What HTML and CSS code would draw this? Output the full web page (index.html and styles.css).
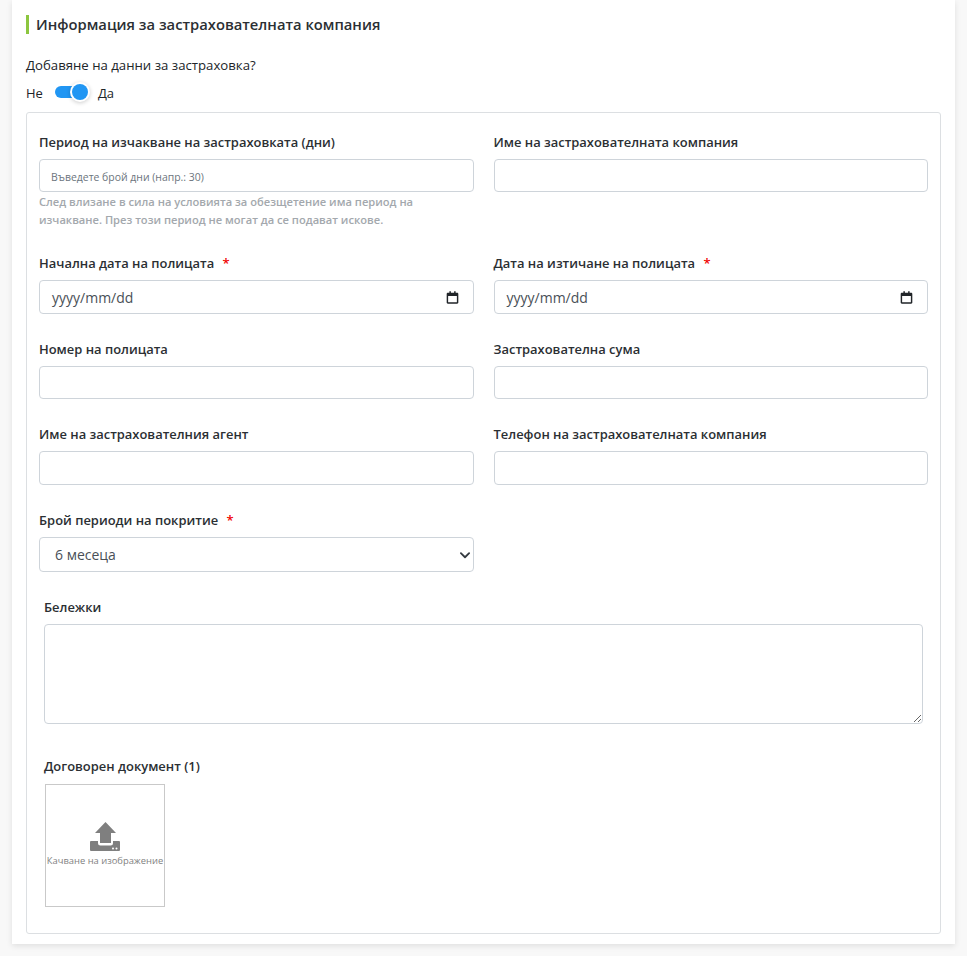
FILE: index.html
```html
<!DOCTYPE html>
<html lang="bg">
<head>
    <meta charset="UTF-8">
    <meta name="viewport" content="width=device-width, initial-scale=1.0">
    <title>Застраховка</title>
    <link rel="stylesheet" href="styles.css">
</head>
<body>

<div class="card">
    <!-- Section title -->
    <h2 class="section-title">Информация за застрахователната компания</h2>

    <!-- Yes / no switch -->
    <p class="question">Добавяне на данни за застраховка?</p>
    <div class="switch-row">
        <span>Не</span>
        <span class="switch"><span class="switch-knob"></span></span>
        <span>Да</span>
    </div>

    <div class="form-box">
        <div class="form-grid">
            <div class="field field-wait">
                <label>Период на изчакване на застраховката (дни)</label>
                <input class="control control-small" type="text" placeholder="Въведете брой дни (напр.: 30)">
                <p class="help">След влизане в сила на условията за обезщетение има период на изчакване. През този период не могат да се подават искове.</p>
            </div>
            <div class="field field-wait">
                <label>Име на застрахователната компания</label>
                <input class="control control-small" type="text">
            </div>

            <div class="field">
                <label>Начална дата на полицата <span class="req">*</span></label>
                <div class="control date-control">
                    <span>yyyy/mm/dd</span>
                    <svg class="cal" viewBox="0 0 24 24"><path d="M7 2h2.4v2.2h5.2V2H17v2.2h2.5c1 0 1.8.8 1.8 1.8v14c0 1-.8 1.8-1.8 1.8h-15c-1 0-1.8-.8-1.8-1.8V6c0-1 .8-1.8 1.8-1.8H7V2zM5 9.5V19.500h14V9.500H5z"/></svg>
                </div>
            </div>
            <div class="field">
                <label>Дата на изтичане на полицата <span class="req">*</span></label>
                <div class="control date-control">
                    <span>yyyy/mm/dd</span>
                    <svg class="cal" viewBox="0 0 24 24"><path d="M7 2h2.4v2.2h5.2V2H17v2.2h2.5c1 0 1.8.8 1.8 1.8v14c0 1-.8 1.8-1.8 1.8h-15c-1 0-1.8-.8-1.8-1.8V6c0-1 .8-1.8 1.8-1.8H7V2zM5 9.5V19.500h14V9.500H5z"/></svg>
                </div>
            </div>

            <div class="field field-short">
                <label>Номер на полицата</label>
                <input class="control control-small" type="text">
            </div>
            <div class="field field-short">
                <label>Застрахователна сума</label>
                <input class="control control-small" type="text">
            </div>

            <div class="field">
                <label>Име на застрахователния агент</label>
                <input class="control" type="text">
            </div>
            <div class="field">
                <label>Телефон на застрахователната компания</label>
                <input class="control" type="text">
            </div>

            <div class="field">
                <label>Брой периоди на покритие <span class="req">*</span></label>
                <div class="control select-control">
                    <span>6 месеца</span>
                    <svg class="chevron" viewBox="0 0 16 16"><path d="M2.500 5.500L8 11l5.500-5.500" fill="none" stroke="#343a40" stroke-width="2.400" stroke-linecap="round" stroke-linejoin="round"/></svg>
                </div>
            </div>
        </div>

        <!-- Notes -->
        <div class="notes">
            <label>Бележки</label>
            <textarea class="notes-input"></textarea>
        </div>

        <!-- Upload -->
        <div class="upload">
            <label>Договорен документ (1)</label>
            <div class="upload-box">
                <svg class="upload-icon" viewBox="0 0 30 30">
                    <path d="M15.500 0L26 11h-5v10H10V11H5z" fill="#7f7f7f"/>
                    <path d="M1 19h7v2q0 2.500 2.500 2.500h10q2.500 0 2.500-2.500v-2h6q1 0 1 1v8q0 1-1 1H1q-1 0-1-1v-8q0-1 1-1z" fill="#7f7f7f"/>
                    <circle cx="23" cy="26.500" r="1" fill="#fff"/>
                    <circle cx="26.500" cy="26.500" r="1" fill="#fff"/>
                </svg>
                <span class="upload-text">Качване на изображение</span>
            </div>
        </div>
    </div>
</div>

</body>
</html>
```

FILE: styles.css
```css
* {
    box-sizing: border-box;
}
body {
    font-family: "Open Sans", "Noto Sans", sans-serif;
    background-color: #f8f8f8;
    color: #212529;
    margin: 0;
    padding: 0 12px 12px;
    font-size: 13px;
}
.card {
    background-color: white;
    padding: 15px 14px 10px;
    box-shadow: 0 2px 6px rgba(0, 0, 0, 0.1);
}
.section-title {
    margin: 0 0 22px;
    padding-left: 7px;
    border-left: 3px solid #8cc63f;
    font-size: 14.75px;
    font-weight: 600;
    line-height: 19px;
    color: #2b2f33;
}
.question {
    margin: 0 0 9px;
    font-size: 13.2px;
    line-height: 18px;
}
.switch-row {
    display: flex;
    align-items: center;
    gap: 12px;
    height: 20px;
    margin-bottom: 9px;
}
.switch {
    position: relative;
    display: block;
    width: 31px;
    height: 12px;
    margin-top: -3px;
    border-radius: 6px;
    background-color: #2196f3;
}
.switch-knob {
    position: absolute;
    right: -2px;
    top: -2px;
    width: 16px;
    height: 16px;
    border-radius: 50%;
    background-color: #2196f3;
    box-shadow: 0 0 0 2px white, 0 1px 4px 2px rgba(0, 0, 0, 0.2);
}
.form-box {
    border: 1px solid #dcdfe2;
    border-radius: 3px;
    padding: 19px 12px 26px;
}
.form-grid {
    display: grid;
    grid-template-columns: 1fr 1fr;
    column-gap: 20px;
}
.field {
    min-height: 86px;
}
.field-short {
    min-height: 85px;
}
.field label, .notes label, .upload label {
    display: block;
    margin-bottom: 7px;
    font-size: 12.95px;
    font-weight: 600;
    line-height: 20px;
    color: #2b2f33;
}
.req {
    color: #f00000;
    margin-left: 5px;
}
.control {
    display: block;
    width: 100%;
    height: 34px;
    padding: 0 12px;
    border: 1px solid #ced4da;
    border-radius: 4px;
    background-color: white;
    font-family: inherit;
    font-size: 14px;
    color: #495057;
}
.control-small {
    height: 33px;
    padding: 0 11px;
}
.control-small::placeholder {
    font-size: 10.45px;
    color: #6c757d;
}
.field-wait {
    min-height: 121px;
}
.help {
    max-width: 385px;
    margin: 1px 0 0;
    font-size: 11.15px;
    font-weight: 600;
    line-height: 18px;
    color: #a3a8ad;
}
.date-control, .select-control {
    display: flex;
    align-items: center;
    justify-content: space-between;
}
.select-control {
    height: 35px;
    padding: 0 2px 0 15px;
}
.cal {
    width: 15px;
    height: 15px;
    fill: #212529;
    margin-right: 1px;
}
.chevron {
    width: 12px;
    height: 12px;
}
.notes {
    margin: 1px 5px 0;
}
.notes label {
    margin-bottom: 7px;
}
.notes-input {
    display: block;
    width: 100%;
    height: 100px;
    border: 1px solid #ced4da;
    border-radius: 4px;
}
.upload {
    margin: 32px 5px 0;
}
.upload label {
    margin-bottom: 8px;
}
.upload-box {
    display: flex;
    flex-direction: column;
    align-items: center;
    width: 120px;
    height: 123px;
    margin-left: 1px;
    padding-top: 37px;
    border: 1px solid #c9c9c9;
}
.upload-icon {
    display: block;
    width: 30px;
    height: 30px;
}
.upload-text {
    margin-top: 3px;
    font-size: 9.4px;
    line-height: 12px;
    color: #7f7f7f;
    white-space: nowrap;
}
```
